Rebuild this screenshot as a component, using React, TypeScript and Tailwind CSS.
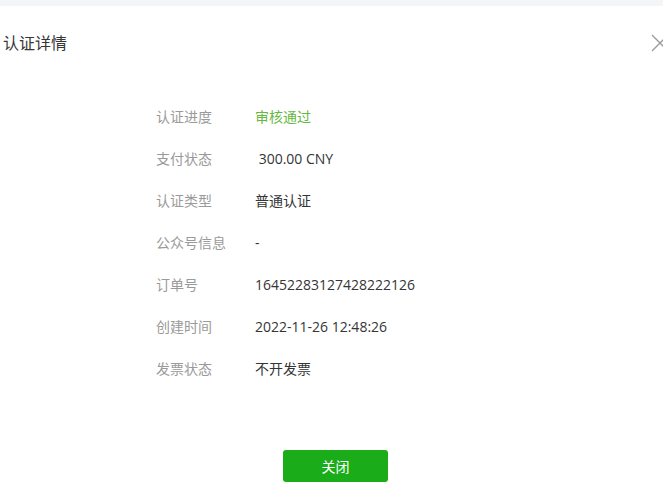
import React from "react";

const rows: { label: string; value: string; green?: boolean }[] = [
  { label: "认证进度", value: "审核通过", green: true },
  { label: "支付状态", value: "\u00a0300.00 CNY" },
  { label: "认证类型", value: "普通认证" },
  { label: "公众号信息", value: "-" },
  { label: "订单号", value: "16452283127428222126" },
  { label: "创建时间", value: "2022-11-26 12:48:26" },
  { label: "发票状态", value: "不开发票" },
];

export default function App() {
  return (
    <div
      className="w-[663px] h-[498px] bg-white overflow-hidden flex flex-col"
      style={{ fontFamily: '"Open Sans", "Noto Sans CJK SC", sans-serif' }}
    >
      <div className="h-[6px] bg-[#f4f5f6] shrink-0" />
      <div className="flex items-center justify-between h-[74px] pl-[3px] shrink-0">
        <span className="text-[16px] text-[#353535] leading-none">认证详情</span>
        <svg width="18" height="18" viewBox="0 0 18 18" className="mr-[-6px] shrink-0">
          <path d="M1 1L17 17M17 1L1 17" stroke="#999" strokeWidth="1.3" fill="none" />
        </svg>
      </div>
      <div className="flex flex-col pl-[156px] pt-[26px] gap-[20px]">
        {rows.map((r) => (
          <div key={r.label} className="flex items-center h-[22px] text-[14px] leading-[22px]">
            <span className="w-[99px] text-[#9a9a9a]">{r.label}</span>
            <span className={r.green ? "text-[#67b83f]" : "text-[#353535]"}>{r.value}</span>
          </div>
        ))}
      </div>
      <div className="flex justify-center pt-[70px] pl-[8px]">
        <button className="w-[105px] h-[32px] rounded-[3px] bg-[#1aad19] text-white text-[14px]">
          关闭
        </button>
      </div>
    </div>
  );
}
